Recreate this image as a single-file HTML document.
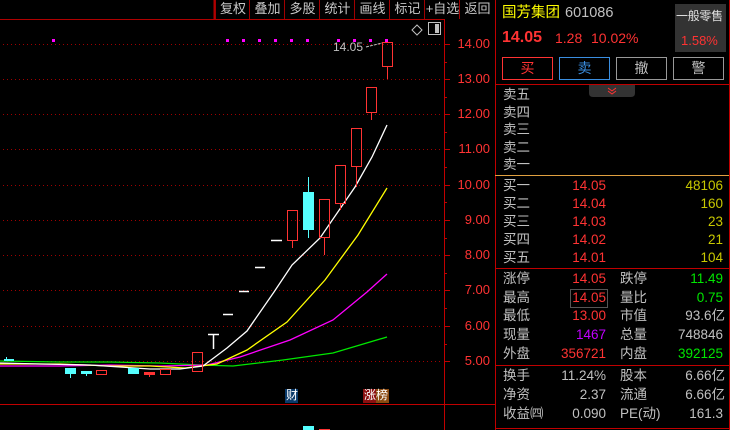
<!DOCTYPE html>
<html><head><meta charset="utf-8"><style>
*{margin:0;padding:0}
body{width:730px;height:430px;background:#000;overflow:hidden;position:relative;font-family:"Liberation Sans","Noto Sans CJK SC",sans-serif;color:#c0c0c0}
.a{position:absolute;white-space:nowrap;line-height:1}
.tb{position:absolute;top:0;height:19px;font-size:13px;line-height:18px;text-align:center;color:#c8c8c8;border-left:1px solid #a00000}
.l{position:absolute;font-size:13.5px;line-height:1;color:#c0c0c0;white-space:nowrap}
.r{position:absolute;font-size:13.5px;line-height:1;text-align:right;white-space:nowrap}
.red{color:#ff3333}.yel{color:#c8c800}.grn{color:#00e600}
.btn{position:absolute;top:57px;width:49px;height:21px;font-size:14px;line-height:21px;text-align:center}
</style></head><body>
<svg width="730" height="430" style="position:absolute;left:0;top:0">
<line x1="0" y1="19.5" x2="444" y2="19.5" stroke="#b00000"/>
<line x1="214.5" y1="0" x2="214.5" y2="19" stroke="#b00000" stroke-width="2"/>
<g stroke="#a00000" stroke-dasharray="1 3">
<line x1="3" y1="44.5" x2="441" y2="44.5"/><line x1="3" y1="79.5" x2="441" y2="79.5"/><line x1="3" y1="114.5" x2="441" y2="114.5"/><line x1="3" y1="149.5" x2="441" y2="149.5"/><line x1="3" y1="185.5" x2="441" y2="185.5"/><line x1="3" y1="220.5" x2="441" y2="220.5"/><line x1="3" y1="255.5" x2="441" y2="255.5"/><line x1="3" y1="290.5" x2="441" y2="290.5"/><line x1="3" y1="326.5" x2="441" y2="326.5"/><line x1="3" y1="361.5" x2="441" y2="361.5"/>
</g>
<line x1="444.5" y1="19" x2="444.5" y2="430" stroke="#c00000"/>
<g stroke="#c00000">
<line x1="444" y1="44.5" x2="450" y2="44.5"/><line x1="444" y1="79.5" x2="450" y2="79.5"/><line x1="444" y1="114.5" x2="450" y2="114.5"/><line x1="444" y1="149.5" x2="450" y2="149.5"/><line x1="444" y1="185.5" x2="450" y2="185.5"/><line x1="444" y1="220.5" x2="450" y2="220.5"/><line x1="444" y1="255.5" x2="450" y2="255.5"/><line x1="444" y1="290.5" x2="450" y2="290.5"/><line x1="444" y1="326.5" x2="450" y2="326.5"/><line x1="444" y1="361.5" x2="450" y2="361.5"/>
<line x1="444" y1="62.5" x2="447" y2="62.5"/><line x1="444" y1="97.5" x2="447" y2="97.5"/><line x1="444" y1="132.5" x2="447" y2="132.5"/><line x1="444" y1="167.5" x2="447" y2="167.5"/><line x1="444" y1="202.5" x2="447" y2="202.5"/><line x1="444" y1="238.5" x2="447" y2="238.5"/><line x1="444" y1="273.5" x2="447" y2="273.5"/><line x1="444" y1="308.5" x2="447" y2="308.5"/><line x1="444" y1="344.5" x2="447" y2="344.5"/>
</g>
<line x1="0" y1="404.5" x2="495" y2="404.5" stroke="#c00000"/>
<line x1="495.5" y1="0" x2="495.5" y2="430" stroke="#c00000"/>
<line x1="495" y1="84.5" x2="730" y2="84.5" stroke="#c00000"/>
<line x1="495" y1="175.5" x2="730" y2="175.5" stroke="#e0a040"/>
<line x1="495" y1="268.5" x2="730" y2="268.5" stroke="#c00000"/>
<line x1="495" y1="365.5" x2="730" y2="365.5" stroke="#c00000"/>
<line x1="495" y1="428.5" x2="730" y2="428.5" stroke="#c00000"/>
<line x1="729.5" y1="0" x2="729.5" y2="430" stroke="#c00000"/>
<path d="M589 85 H635 V93 Q635 97 631 97 H593 Q589 97 589 93Z" fill="#333"/>
<path d="M608 88 l4 3 l4 -3 M608 91 l4 3 l4 -3" stroke="#ff3333" fill="none"/>
<rect x="570.5" y="289.5" width="37" height="18" fill="none" stroke="#555"/>
<g fill="#ff00ff">
<rect x="52" y="39" width="3" height="3"/><rect x="226" y="39" width="3" height="3"/><rect x="242" y="39" width="3" height="3"/><rect x="258" y="39" width="3" height="3"/><rect x="274" y="39" width="3" height="3"/><rect x="290" y="39" width="3" height="3"/><rect x="306" y="39" width="3" height="3"/><rect x="337" y="39" width="3" height="3"/><rect x="353" y="39" width="3" height="3"/><rect x="369" y="39" width="3" height="3"/><rect x="385" y="39" width="3" height="3"/>
</g>
<path d="M417 25 l5 5 l-5 5 l-5 -5z" fill="none" stroke="#c0c0c0"/>
<rect x="428.5" y="22.5" width="12" height="12" fill="none" stroke="#c0c0c0"/><rect x="435" y="24" width="4" height="9" fill="#c0c0c0"/>
<path d="M366 47 L382 43" stroke="#c0c0c0" stroke-dasharray="3 1"/>
<g fill="none" stroke-width="1.3">
<polyline stroke="#00e600" points="0,361 60,362 110,362 160,363 200,365 233,366 283,360 333,353 387,337"/>
<polyline stroke="#ff00ff" points="0,366 60,366 110,365 160,366 207,365 240,357 290,340 333,320 367,292 387,274"/>
<polyline stroke="#ffff00" points="0,364 60,364 110,366 150,366 185,368 217,364 247,350 287,322 325,280 358,235 387,188"/>
<polyline stroke="#ffffff" points="0,363 40,364 90,365 120,367 150,369 180,369 203,366 227,348 247,331 274,292 292,265 320,238 355,187 372,157 387,125"/>
</g>
<g>
<rect x="4" y="359" width="10" height="2" fill="#55ffff"/><line x1="6.5" y1="357" x2="6.5" y2="360" stroke="#55ffff"/>
<rect x="65" y="368" width="11" height="6" fill="#55ffff"/><line x1="70.5" y1="374" x2="70.5" y2="378" stroke="#55ffff"/>
<rect x="81" y="371" width="11" height="3" fill="#55ffff"/><line x1="86.5" y1="374" x2="86.5" y2="376" stroke="#55ffff"/>
<rect x="96.5" y="370.5" width="10" height="4" fill="none" stroke="#ff3333"/>
<rect x="128" y="368" width="11" height="6" fill="#55ffff"/>
<rect x="144" y="372" width="11" height="3" fill="#ff3333"/><line x1="149.5" y1="374" x2="149.5" y2="377" stroke="#ff3333"/>
<rect x="160.5" y="369.5" width="10" height="5" fill="none" stroke="#ff3333"/>
<rect x="192.5" y="352.5" width="10" height="19" fill="none" stroke="#ff3333"/>
</g>
<g stroke="#fff" stroke-width="1.5">
<line x1="208" y1="334.5" x2="219" y2="334.5"/><line x1="213.5" y1="334" x2="213.5" y2="349"/>
<line x1="223" y1="314.5" x2="233" y2="314.5"/><line x1="239" y1="291.5" x2="249" y2="291.5"/><line x1="255" y1="267.5" x2="265" y2="267.5"/><line x1="271" y1="240.5" x2="282" y2="240.5"/>
</g>
<g fill="none" stroke="#ff3333">
<rect x="287.5" y="210.5" width="10" height="30"/><line x1="292.5" y1="241" x2="292.5" y2="248"/>
<rect x="319.5" y="199.5" width="10" height="38"/><line x1="324.5" y1="238" x2="324.5" y2="255"/>
<rect x="335.5" y="165.5" width="10" height="38"/><line x1="340.5" y1="204" x2="340.5" y2="210"/>
<rect x="351.5" y="128.5" width="10" height="38"/><line x1="356.5" y1="167" x2="356.5" y2="187"/>
<rect x="366.5" y="87.5" width="10" height="25"/><line x1="371.5" y1="113" x2="371.5" y2="120"/>
<rect x="382.5" y="42.5" width="10" height="24"/><line x1="387.5" y1="67" x2="387.5" y2="79"/>
</g>
<rect x="303" y="192" width="11" height="38" fill="#55ffff"/><line x1="308.5" y1="177" x2="308.5" y2="238" stroke="#55ffff"/>
<rect x="285" y="389" width="13" height="14" fill="#0a3a6a"/>
<rect x="363" y="389" width="13" height="14" fill="#8a1010"/><rect x="376" y="389" width="13" height="14" fill="#8a4a10"/>
<rect x="303" y="426" width="11" height="4" fill="#55ffff"/><rect x="319" y="429" width="11" height="1" fill="#ff3333"/>
</svg>
<div class="tb" style="left:215px;width:34px">复权</div>
<div class="tb" style="left:249px;width:35px">叠加</div>
<div class="tb" style="left:284px;width:35px">多股</div>
<div class="tb" style="left:319px;width:35px">统计</div>
<div class="tb" style="left:354px;width:35px">画线</div>
<div class="tb" style="left:389px;width:35px">标记</div>
<div class="tb" style="left:424px;width:35px">+自选</div>
<div class="tb" style="left:459px;width:35px">返回</div>
<div class="a" style="left:333px;top:41px;font-size:12px;color:#c0c0c0">14.05</div>
<div class="a" style="left:286px;top:389px;font-size:12px;color:#fff">财</div>
<div class="a" style="left:364px;top:389px;font-size:12px;color:#fff">涨榜</div>
<div class="r red" style="left:446px;width:44px;top:37px;font-size:13px">14.00</div>
<div class="r red" style="left:446px;width:44px;top:72px;font-size:13px">13.00</div>
<div class="r red" style="left:446px;width:44px;top:107px;font-size:13px">12.00</div>
<div class="r red" style="left:446px;width:44px;top:142px;font-size:13px">11.00</div>
<div class="r red" style="left:446px;width:44px;top:178px;font-size:13px">10.00</div>
<div class="r red" style="left:446px;width:44px;top:213px;font-size:13px">9.00</div>
<div class="r red" style="left:446px;width:44px;top:248px;font-size:13px">8.00</div>
<div class="r red" style="left:446px;width:44px;top:283px;font-size:13px">7.00</div>
<div class="r red" style="left:446px;width:44px;top:319px;font-size:13px">6.00</div>
<div class="r red" style="left:446px;width:44px;top:354px;font-size:13px">5.00</div>
<div class="a" style="left:502px;top:6px;font-size:14.5px;color:#ffff00">国芳集团</div>
<div class="a" style="left:565px;top:6px;font-size:14.5px;color:#c0c0c0">601086</div>
<div class="a" style="left:502px;top:30px;font-size:16px;font-weight:bold;color:#ff3333">14.05</div>
<div class="a" style="left:555px;top:31px;font-size:14px;color:#ff3333">1.28</div>
<div class="a" style="left:591px;top:31px;font-size:14px;color:#ff3333">10.02%</div>
<div class="a" style="left:675px;top:4px;width:51px;height:48px;background:#333"></div>
<div class="a" style="left:676px;top:10px;font-size:12px;color:#e0e0e0;letter-spacing:-0.3px">一般零售</div>
<div class="a" style="left:681px;top:34px;font-size:13px;color:#ff3333">1.58%</div>
<div class="btn" style="left:502px;border:1px solid #ff3333;color:#ff3333">买</div>
<div class="btn" style="left:559px;border:1px solid #3a8ee0;color:#3a8ee0">卖</div>
<div class="btn" style="left:616px;border:1px solid #999;color:#c0c0c0">撤</div>
<div class="btn" style="left:673px;border:1px solid #999;color:#c0c0c0">警</div>
<div class="l" style="left:503px;top:88px">卖五</div>
<div class="l" style="left:503px;top:106px">卖四</div>
<div class="l" style="left:503px;top:123px">卖三</div>
<div class="l" style="left:503px;top:141px">卖二</div>
<div class="l" style="left:503px;top:158px">卖一</div>
<div class="l" style="left:503px;top:179px">买一</div><div class="r red" style="right:124px;top:179px">14.05</div><div class="r yel" style="right:7px;top:179px">48106</div>
<div class="l" style="left:503px;top:197px">买二</div><div class="r red" style="right:124px;top:197px">14.04</div><div class="r yel" style="right:7px;top:197px">160</div>
<div class="l" style="left:503px;top:215px">买三</div><div class="r red" style="right:124px;top:215px">14.03</div><div class="r yel" style="right:7px;top:215px">23</div>
<div class="l" style="left:503px;top:233px">买四</div><div class="r red" style="right:124px;top:233px">14.02</div><div class="r yel" style="right:7px;top:233px">21</div>
<div class="l" style="left:503px;top:251px">买五</div><div class="r red" style="right:124px;top:251px">14.01</div><div class="r yel" style="right:7px;top:251px">104</div>
<div class="l" style="left:503px;top:272px">涨停</div><div class="r red" style="right:124px;top:272px">14.05</div><div class="l" style="left:620px;top:272px">跌停</div><div class="r grn" style="right:7px;top:272px">11.49</div>
<div class="l" style="left:503px;top:291px">最高</div><div class="r red" style="right:124px;top:291px">14.05</div><div class="l" style="left:620px;top:291px">量比</div><div class="r grn" style="right:7px;top:291px">0.75</div>
<div class="l" style="left:503px;top:309px">最低</div><div class="r red" style="right:124px;top:309px">13.00</div><div class="l" style="left:620px;top:309px">市值</div><div class="r" style="right:5px;top:309px;color:#c0c0c0">93.6亿</div>
<div class="l" style="left:503px;top:328px">现量</div><div class="r" style="right:124px;top:328px;color:#c000ff">1467</div><div class="l" style="left:620px;top:328px">总量</div><div class="r" style="right:7px;top:328px;color:#c0c0c0">748846</div>
<div class="l" style="left:503px;top:347px">外盘</div><div class="r red" style="right:124px;top:347px">356721</div><div class="l" style="left:620px;top:347px">内盘</div><div class="r grn" style="right:7px;top:347px">392125</div>
<div class="l" style="left:503px;top:369px">换手</div><div class="r" style="right:124px;top:369px;color:#c0c0c0">11.24%</div><div class="l" style="left:620px;top:369px">股本</div><div class="r" style="right:5px;top:369px;color:#c0c0c0">6.66亿</div>
<div class="l" style="left:503px;top:388px">净资</div><div class="r" style="right:124px;top:388px;color:#c0c0c0">2.37</div><div class="l" style="left:620px;top:388px">流通</div><div class="r" style="right:5px;top:388px;color:#c0c0c0">6.66亿</div>
<div class="l" style="left:503px;top:407px">收益㈣</div><div class="r" style="right:124px;top:407px;color:#c0c0c0">0.090</div><div class="l" style="left:620px;top:407px">PE(动)</div><div class="r" style="right:7px;top:407px;color:#c0c0c0">161.3</div>
</body></html>
